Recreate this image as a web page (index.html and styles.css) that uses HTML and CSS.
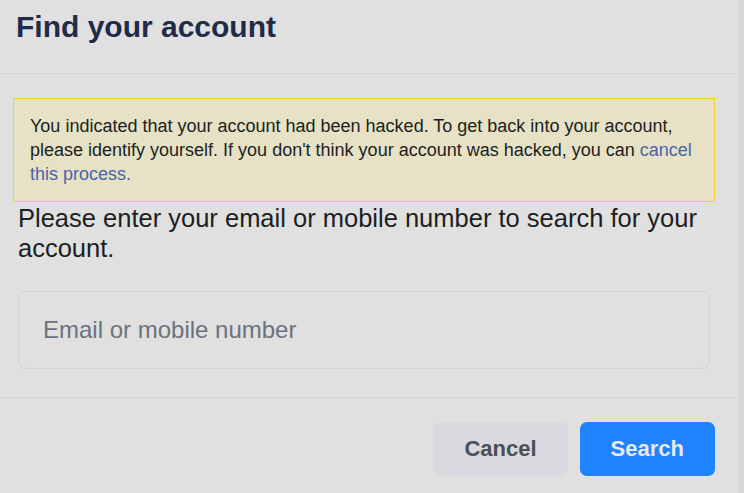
FILE: index.html
```html
<!DOCTYPE html>
<html lang="en">
<head>
<meta charset="utf-8">
<title>Find your account</title>
<link rel="stylesheet" href="styles.css">
</head>
<body>
<div class="page">
  <div class="dialog">
    <header class="head">
      <h1 class="title">Find your account</h1>
    </header>
    <div class="content">
      <div class="notice">You indicated that your account had been hacked. To get back into your account, please identify yourself. If you don't think your account was hacked, you can <a class="notice-link" href="#">cancel this process.</a></div>
      <p class="prompt">Please enter your email or mobile number to search for your account.</p>
      <input class="field" type="text" placeholder="Email or mobile number">
    </div>
    <footer class="actions">
      <button class="btn btn-cancel" type="button">Cancel</button>
      <button class="btn btn-search" type="button">Search</button>
    </footer>
  </div>
  <div class="strip"></div>
</div>
</body>
</html>
```

FILE: styles.css
```css
html, body {
  margin: 0;
  padding: 0;
  background: #e0e0e0;
}

body {
  font-family: "Liberation Sans", Arial, sans-serif;
  color: #1c1e21;
}

.page {
  display: flex;
  width: 744px;
  height: 493px;
  overflow: hidden;
}

.dialog {
  flex: 1;
  display: flex;
  flex-direction: column;
  min-width: 0;
}

.strip {
  width: 6px;
  flex: none;
  background: #d7d7d7;
}

.head {
  height: 74px;
  box-sizing: border-box;
  padding: 9px 16px 0 16px;
  border-bottom: 1px solid #d5d5d5;
}

.title {
  margin: 0;
  font-size: 30px;
  line-height: 36px;
  font-weight: bold;
  color: #1f2b48;
}

.content {
  padding: 24px 28px 28px 18px;
  border-bottom: 1px solid #d5d5d5;
}

.notice {
  margin: 0 -5px;
  padding: 15px 16px;
  background: #e7e2c6;
  border: 1px solid #f2d23a;
  font-size: 18px;
  line-height: 24px;
  color: #1c1e21;
}

.notice-link {
  color: #4a63ad;
  text-decoration: none;
}

.prompt {
  margin: 1px 0 0 0;
  font-size: 25.5px;
  line-height: 30px;
  color: #1c1e21;
}

.field {
  display: block;
  box-sizing: border-box;
  width: 100%;
  height: 78px;
  margin-top: 28px;
  padding: 0 24px;
  border: 1px solid #d0d2d7;
  border-radius: 7px;
  background: #e0e0e0;
  font-family: "Liberation Sans", Arial, sans-serif;
  font-size: 24px;
  color: #1c1e21;
  outline: none;
}

.field::placeholder {
  color: #6b727d;
}

.actions {
  display: flex;
  justify-content: flex-end;
  gap: 12px;
  padding: 24px 23px 0 0;
}

.btn {
  height: 54px;
  padding: 0 31px;
  border: none;
  border-radius: 7px;
  font-family: "Liberation Sans", Arial, sans-serif;
  font-size: 22px;
  font-weight: bold;
  cursor: pointer;
}

.btn-cancel {
  background: #d8dadf;
  color: #4b4f56;
}

.btn-search {
  background: #1f82fe;
  color: #e6e9f0;
}
```
